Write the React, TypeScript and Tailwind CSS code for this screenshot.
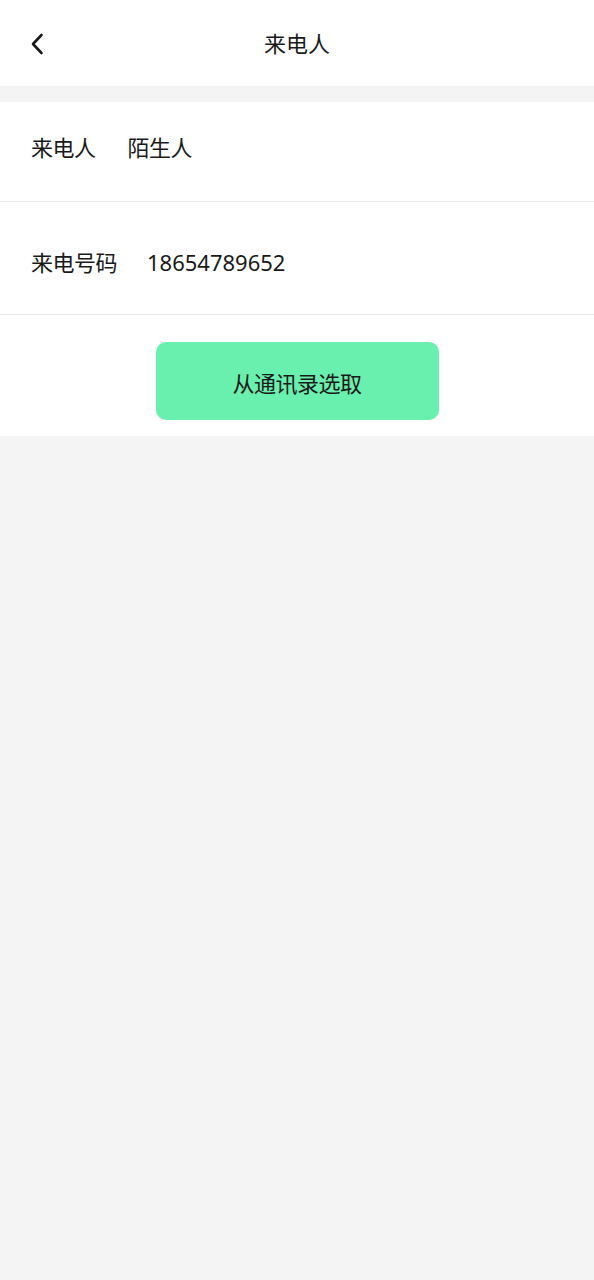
const App = () => {
  return (
    <div
      className="min-h-screen bg-[#f4f4f4] text-[#1a1a1a]"
      style={{ fontFamily: '"Noto Sans", "Noto Sans CJK SC", sans-serif' }}
    >
      <div className="relative flex h-[86px] items-center justify-center bg-white">
        <button className="absolute left-[26px] top-[29px] p-1">
          <svg width="14" height="22" viewBox="0 0 14 22" fill="none">
            <path d="M11.5 2L3 11L11.5 20" stroke="#1a1a1a" strokeWidth="2.6" strokeLinecap="round" strokeLinejoin="round" />
          </svg>
        </button>
        <h1 className="text-[22px] leading-none">来电人</h1>
      </div>

      <div className="mt-[16px] bg-white">
        <div className="flex h-[100px] items-center border-b border-[#ebebeb] pb-[8px] pl-[31px] text-[22px] -tracking-[0.5px]">
          <span>来电人</span>
          <span className="ml-[32px]">陌生人</span>
        </div>
        <div className="flex h-[113px] items-center border-b border-[#ebebeb] pt-[8px] pl-[31px] text-[22px]">
          <span className="-tracking-[0.5px]">来电号码</span>
          <span className="ml-[30px]">18654789652</span>
        </div>
        <div className="flex justify-center pt-[27px] pb-[16px]">
          <button className="flex h-[78px] w-[283px] items-center justify-center rounded-[10px] bg-[#69f0ae] pt-[4px] text-[22px] -tracking-[0.5px]">
            从通讯录选取
          </button>
        </div>
      </div>
    </div>
  );
};

export default App;
